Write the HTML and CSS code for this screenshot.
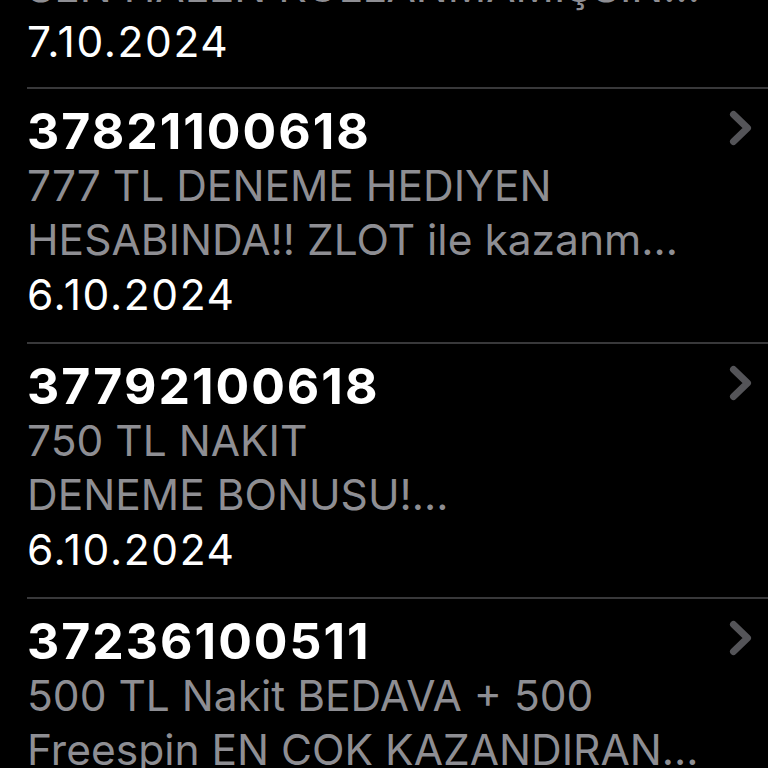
FILE: index.html
```html
<!DOCTYPE html>
<html lang="tr">
<head>
<meta charset="utf-8">
<title>Mesajlar</title>
<link rel="stylesheet" href="styles.css">
</head>
<body>
<main class="list">
  <div class="row">
    <div class="text">
      <div class="sender">37851100618</div>
      <div class="preview">HEMEN GİRİŞ YAP, BONUSU</div>
      <div class="preview">SEN HALEN KULLANMAMIŞSIN…</div>
      <div class="date">7.10.2024</div>
    </div>
    <svg class="chev" viewBox="0 0 23 36" aria-hidden="true"><path d="M4.5 4.5 L18.5 18 L4.5 31.5"/></svg>
  </div>
  <div class="row">
    <div class="text">
      <div class="sender">37821100618</div>
      <div class="preview">777 TL DENEME HEDIYEN</div>
      <div class="preview">HESABINDA!! ZLOT ile kazanm…</div>
      <div class="date">6.10.2024</div>
    </div>
    <svg class="chev" viewBox="0 0 23 36" aria-hidden="true"><path d="M4.5 4.5 L18.5 18 L4.5 31.5"/></svg>
  </div>
  <div class="row">
    <div class="text">
      <div class="sender">37792100618</div>
      <div class="preview">750 TL NAKIT</div>
      <div class="preview">DENEME BONUSU!…</div>
      <div class="date">6.10.2024</div>
    </div>
    <svg class="chev" viewBox="0 0 23 36" aria-hidden="true"><path d="M4.5 4.5 L18.5 18 L4.5 31.5"/></svg>
  </div>
  <div class="row">
    <div class="text">
      <div class="sender">37236100511</div>
      <div class="preview">500 TL Nakit BEDAVA + 500</div>
      <div class="preview">Freespin EN COK KAZANDIRAN…</div>
      <div class="date">5.10.2024</div>
    </div>
    <svg class="chev" viewBox="0 0 23 36" aria-hidden="true"><path d="M4.5 4.5 L18.5 18 L4.5 31.5"/></svg>
  </div>
</main>
</body>
</html>
```
FILE: styles.css
```css
html, body {
  margin: 0;
  padding: 0;
  background: #000;
  height: 768px;
  overflow: hidden;
}

body {
  font-family: Inter, "Liberation Sans", sans-serif;
  color: #fff;
}

.list {
  margin-top: -164px;
  padding-left: 27px;
}

.row {
  display: flex;
  align-items: flex-start;
  padding: 13.5px 16px 20px 0;
  border-bottom: 2px solid #38383a;
}

.row:first-child {
  padding-bottom: 18px;
}

.text {
  flex: 1;
  min-width: 0;
}

.sender {
  font-size: 50px;
  font-weight: 700;
  line-height: 56px;
  letter-spacing: 2px;
  white-space: nowrap;
}

.preview {
  font-size: 42.5px;
  line-height: 54.5px;
  color: #8e8e93;
  white-space: nowrap;
}

.date {
  font-size: 42.5px;
  line-height: 54.5px;
  letter-spacing: 1.6px;
  color: #fff;
  white-space: nowrap;
}

.chev {
  width: 23px;
  height: 36px;
  margin-top: 7px;
  flex: none;
}

.chev path {
  fill: none;
  stroke: #545458;
  stroke-width: 7;
  stroke-linecap: round;
  stroke-linejoin: round;
}
```
